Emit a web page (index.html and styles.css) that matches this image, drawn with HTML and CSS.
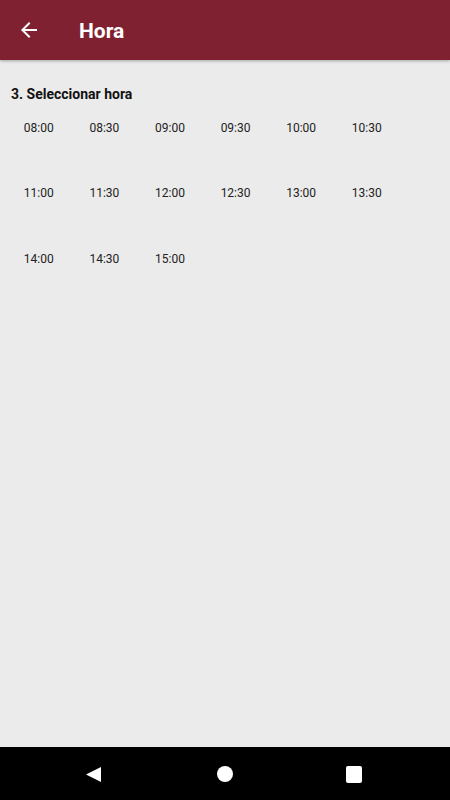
FILE: index.html
```html
<!DOCTYPE html>
<html lang="es">
<head>
    <meta charset="UTF-8">
    <meta name="viewport" content="width=device-width, initial-scale=1.0">
    <title>Hora</title>
    <link rel="stylesheet" href="styles.css">
</head>
<body>
    <header class="toolbar">
        <button class="back-btn" type="button" aria-label="Volver">
            <svg width="24" height="24" viewBox="0 0 24 24">
                <path fill="#fff" d="M20 11H7.83l5.59-5.59L12 4l-8 8 8 8 1.41-1.41L7.83 13H20v-2z"/>
            </svg>
        </button>
        <h1 class="toolbar-title">Hora</h1>
    </header>

    <main class="content">
        <h2 class="step-title">3. Seleccionar hora</h2>

        <div class="time-grid">
            <button class="time-slot" type="button">08:00</button>
            <button class="time-slot" type="button">08:30</button>
            <button class="time-slot" type="button">09:00</button>
            <button class="time-slot" type="button">09:30</button>
            <button class="time-slot" type="button">10:00</button>
            <button class="time-slot" type="button">10:30</button>
            <button class="time-slot" type="button">11:00</button>
            <button class="time-slot" type="button">11:30</button>
            <button class="time-slot" type="button">12:00</button>
            <button class="time-slot" type="button">12:30</button>
            <button class="time-slot" type="button">13:00</button>
            <button class="time-slot" type="button">13:30</button>
            <button class="time-slot" type="button">14:00</button>
            <button class="time-slot" type="button">14:30</button>
            <button class="time-slot" type="button">15:00</button>
        </div>
    </main>

    <nav class="nav-bar">
        <svg width="16" height="16" viewBox="0 0 16 16">
            <path fill="#fff" d="M15 0v15L0 7.5z"/>
        </svg>
        <span class="nav-home"></span>
        <span class="nav-recent"></span>
    </nav>
</body>
</html>
```

FILE: styles.css
```css
* {
    box-sizing: border-box;
}

body {
    margin: 0;
    height: 800px;
    display: flex;
    flex-direction: column;
    font-family: Roboto, 'Noto Sans', sans-serif;
    background-color: #ebebeb;
    color: #1a1a1a;
}

.toolbar {
    height: 60px;
    flex-shrink: 0;
    display: flex;
    align-items: center;
    background-color: #7f2130;
    box-shadow: 0 1px 3px rgba(0, 0, 0, 0.3);
    position: relative;
    z-index: 1;
}

.back-btn {
    width: 24px;
    height: 24px;
    margin-left: 17px;
    padding: 0;
    border: none;
    background: none;
    display: flex;
}

.toolbar-title {
    margin: 2px 0 0 38px;
    color: #fff;
    font-size: 21px;
    font-weight: bold;
}

.content {
    flex: 1;
    padding-top: 26px;
}

.step-title {
    margin: 0 11px;
    font-size: 14px;
    line-height: 17px;
    font-weight: bold;
    color: #111;
}

.time-grid {
    display: grid;
    grid-template-columns: repeat(6, 65.6px);
    grid-auto-rows: 65.6px;
    padding: 0 6px;
}

.time-slot {
    padding: 17.5px 0 0;
    border: none;
    background: none;
    font-family: inherit;
    font-size: 12px;
    line-height: 14px;
    color: #222;
    text-align: center;
    align-self: start;
    height: 65.6px;
    display: flex;
    justify-content: center;
}

.nav-bar {
    height: 53px;
    flex-shrink: 0;
    display: flex;
    align-items: center;
    justify-content: space-between;
    padding: 0 88px 0 86px;
    background-color: #000;
}

.nav-bar svg {
    margin-top: 2px;
}

.nav-home {
    width: 16px;
    height: 16px;
    border-radius: 50%;
    background-color: #fff;
    margin-left: 2px;
}

.nav-recent {
    width: 16px;
    height: 17px;
    border-radius: 2px;
    background-color: #fff;
    margin-top: 2px;
}
```
